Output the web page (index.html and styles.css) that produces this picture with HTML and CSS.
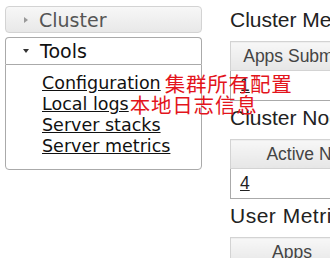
FILE: index.html
```html
<!DOCTYPE html>
<html lang="en">
<head>
    <meta charset="UTF-8">
    <title>All Applications</title>
    <link rel="stylesheet" href="styles.css">
</head>
<body>
<div class="layout">
    <div class="nav">
        <div class="nav-head closed"><span class="tri-right"></span>Cluster</div>
        <div class="nav-head open"><span class="tri-down"></span>Tools</div>
        <div class="nav-body">
            <div class="item"><a href="#">Configuration</a><span class="note">集群所有配置</span></div>
            <div class="item"><a href="#">Local logs</a><span class="note tight">本地日志信息</span></div>
            <div class="item"><a href="#">Server stacks</a></div>
            <div class="item"><a href="#">Server metrics</a></div>
        </div>
    </div>
    <div class="main">
        <h3>Cluster Metrics</h3>
        <table class="metrics">
            <thead>
                <tr><th class="w1">Apps Submitted</th><th>Apps Pending</th></tr>
            </thead>
            <tbody>
                <tr><td><a href="#">1</a></td><td>0</td></tr>
            </tbody>
        </table>
        <h3>Cluster Nodes Metrics</h3>
        <table class="metrics">
            <thead>
                <tr><th class="w2">Active Nodes</th><th>Decommissioning Nodes</th></tr>
            </thead>
            <tbody>
                <tr><td><a href="#">4</a></td><td>0</td></tr>
            </tbody>
        </table>
        <h3 class="wide">User Metrics for dr.who</h3>
        <table class="metrics">
            <thead>
                <tr><th class="w3">Apps</th><th>Apps Pending</th></tr>
            </thead>
        </table>
    </div>
</div>
</body>
</html>
```

FILE: styles.css
```css
body {
    margin: 0;
    font-family: "Liberation Sans", Arial, sans-serif;
    color: #222;
    overflow: hidden;
}

.layout {
    display: flex;
    align-items: flex-start;
    gap: 28px;
    padding: 6px 0 0 5px;
}

/* left accordion */
.nav {
    width: 197px;
    flex-shrink: 0;
    font-family: "DejaVu Sans", Verdana, sans-serif;
    position: relative;
    z-index: 1;
}

.nav-head {
    height: 25px;
    display: flex;
    align-items: center;
    padding-left: 16px;
    font-size: 19px;
    border-radius: 4px;
}

.nav-head.closed {
    border: 1px solid #d3d3d3;
    background: linear-gradient(#f7f7f7, #e8e8e8);
    color: #555;
}

.nav-head.open {
    margin-top: 4px;
    border: 1px solid #aaa;
    border-bottom: none;
    border-radius: 4px 4px 0 0;
    background: #fff;
    color: #111;
    height: 26px;
}

.tri-right {
    width: 0;
    height: 0;
    border-top: 3px solid transparent;
    border-bottom: 3px solid transparent;
    border-left: 4px solid #999;
    margin: 0 11px 0 2px;
}

.tri-down {
    width: 0;
    height: 0;
    border-left: 3px solid transparent;
    border-right: 3px solid transparent;
    border-top: 4px solid #333;
    margin: 0 11px 0 1px;
}

.nav-body {
    border: 1px solid #aaa;
    border-radius: 0 0 4px 4px;
    padding: 8px 0 12px 36px;
    font-size: 17.5px;
    white-space: nowrap;
}

.item {
    height: 21px;
    line-height: 21px;
}

.nav-body a {
    color: #111;
}

.note {
    color: #e3141c;
    font-family: "Noto Sans CJK SC", sans-serif;
    font-size: 20.5px;
    line-height: 21px;
    letter-spacing: 0.8px;
    margin-left: 4px;
    vertical-align: top;
}

.note.tight {
    margin-left: 1px;
}

/* main column */
.main {
    flex-shrink: 0;
    white-space: nowrap;
}

h3 {
    margin: 0;
    font-size: 21px;
    font-weight: normal;
    line-height: 24px;
    padding-top: 2px;
}

h3.wide {
    letter-spacing: 0.5px;
}

.metrics {
    border-collapse: collapse;
    margin: 9px 0 3px;
    font-size: 17.5px;
}

.metrics th {
    height: 28px;
    border: 1px solid #d3d3d3;
    background: linear-gradient(#f7f7f7, #e6e6e6);
    color: #444;
    font-weight: normal;
    text-align: center;
    padding: 0 6px;
}

.metrics .w1 { width: 136px; }
.metrics .w2 { width: 162px; }
.metrics .w3 { width: 110px; }

.metrics td {
    height: 29px;
    border: 1px solid #aaa;
    padding: 0 9px;
    text-align: left;
}

.metrics td a {
    color: #222;
}
```
